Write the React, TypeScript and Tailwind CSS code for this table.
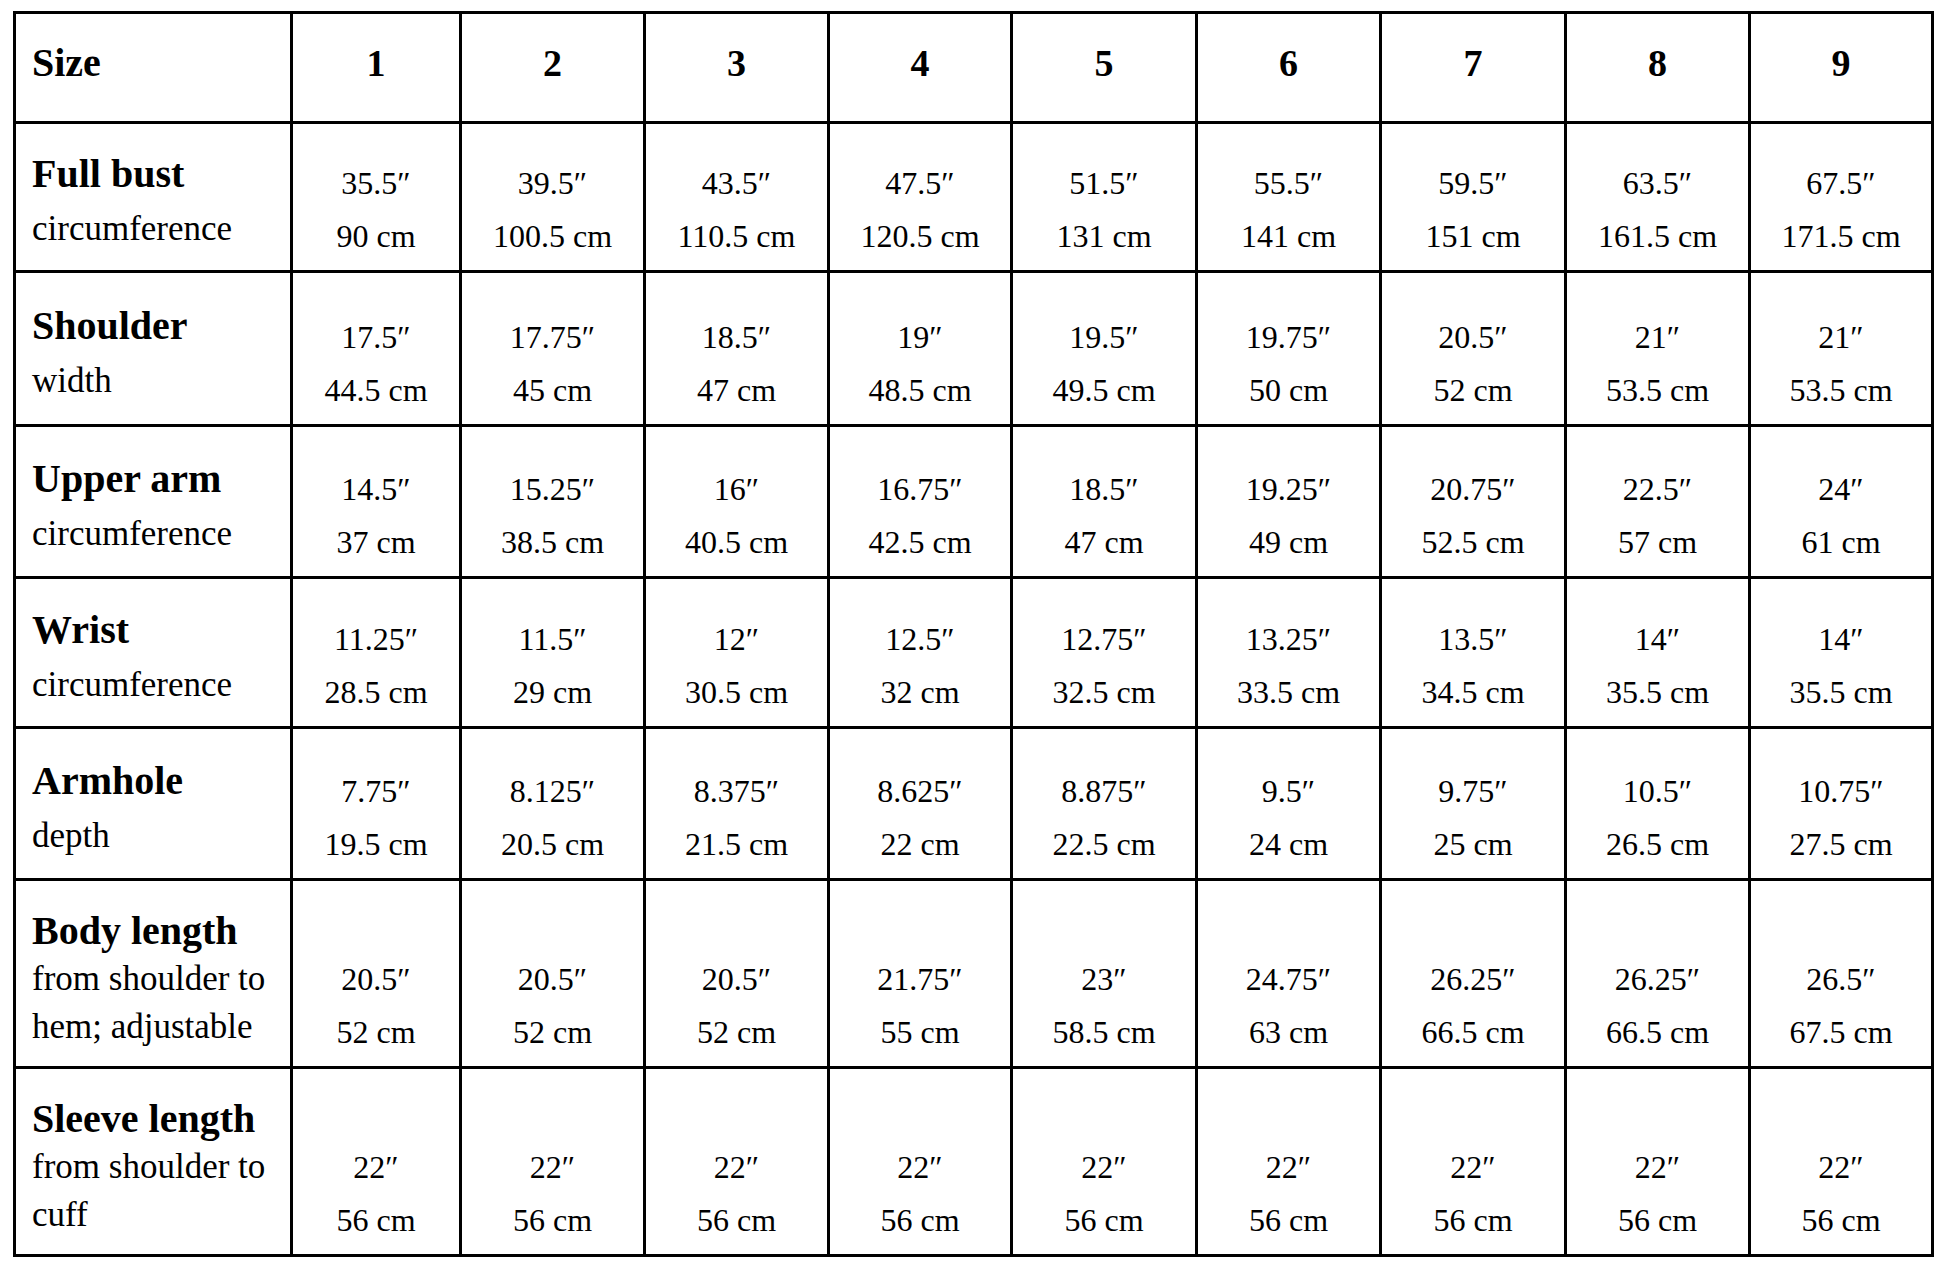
const SIZES = [1, 2, 3, 4, 5, 6, 7, 8, 9];

type Row = {
  title: string;
  sub: string[];
  values: [string, string][];
};

const ROWS: Row[] = [
  {
    title: "Full bust",
    sub: ["circumference"],
    values: [
      ["35.5", "90"],
      ["39.5", "100.5"],
      ["43.5", "110.5"],
      ["47.5", "120.5"],
      ["51.5", "131"],
      ["55.5", "141"],
      ["59.5", "151"],
      ["63.5", "161.5"],
      ["67.5", "171.5"],
    ],
  },
  {
    title: "Shoulder",
    sub: ["width"],
    values: [
      ["17.5", "44.5"],
      ["17.75", "45"],
      ["18.5", "47"],
      ["19", "48.5"],
      ["19.5", "49.5"],
      ["19.75", "50"],
      ["20.5", "52"],
      ["21", "53.5"],
      ["21", "53.5"],
    ],
  },
  {
    title: "Upper arm",
    sub: ["circumference"],
    values: [
      ["14.5", "37"],
      ["15.25", "38.5"],
      ["16", "40.5"],
      ["16.75", "42.5"],
      ["18.5", "47"],
      ["19.25", "49"],
      ["20.75", "52.5"],
      ["22.5", "57"],
      ["24", "61"],
    ],
  },
  {
    title: "Wrist",
    sub: ["circumference"],
    values: [
      ["11.25", "28.5"],
      ["11.5", "29"],
      ["12", "30.5"],
      ["12.5", "32"],
      ["12.75", "32.5"],
      ["13.25", "33.5"],
      ["13.5", "34.5"],
      ["14", "35.5"],
      ["14", "35.5"],
    ],
  },
  {
    title: "Armhole",
    sub: ["depth"],
    values: [
      ["7.75", "19.5"],
      ["8.125", "20.5"],
      ["8.375", "21.5"],
      ["8.625", "22"],
      ["8.875", "22.5"],
      ["9.5", "24"],
      ["9.75", "25"],
      ["10.5", "26.5"],
      ["10.75", "27.5"],
    ],
  },
  {
    title: "Body length",
    sub: ["from shoulder to", "hem; adjustable"],
    values: [
      ["20.5", "52"],
      ["20.5", "52"],
      ["20.5", "52"],
      ["21.75", "55"],
      ["23", "58.5"],
      ["24.75", "63"],
      ["26.25", "66.5"],
      ["26.25", "66.5"],
      ["26.5", "67.5"],
    ],
  },
  {
    title: "Sleeve length",
    sub: ["from shoulder to", "cuff"],
    values: SIZES.map(() => ["22", "56"] as [string, string]),
  },
];

const cell = "border-r-[3px] border-b-[3px] border-black";

export default function App() {
  return (
    <div
      className="min-h-screen bg-white pl-[13px] pt-[11px] text-black"
      style={{ fontFamily: '"Liberation Serif", "Times New Roman", serif' }}
    >
      <div className="grid w-fit grid-cols-[277px_169px_184px_184px_183px_185px_184px_185px_184px_183px] grid-rows-[110px_149px_154px_152px_150px_152px_188px_188px] border-l-[3px] border-t-[3px] border-black">
        {/* header */}
        <div className={`${cell} flex items-center pb-[10px] pl-4 text-[40px] font-bold leading-none`}>
          Size
        </div>
        {SIZES.map((s) => (
          <div
            key={s}
            className={`${cell} flex items-center justify-center pb-[10px] text-[38px] font-bold leading-none`}
          >
            {s}
          </div>
        ))}

        {ROWS.map((row) => (
          <Measurement key={row.title} row={row} />
        ))}
      </div>
    </div>
  );
}

function Measurement({ row }: { row: Row }) {
  const tall = row.sub.length > 1;
  return (
    <>
      <div
        className={`${cell} flex flex-col justify-center pl-4 ${
          tall ? "pt-[10px] leading-[48px]" : "pt-[8px] leading-[55px]"
        }`}
      >
        <span className="text-[40px] font-bold">{row.title}</span>
        {row.sub.map((line) => (
          <span key={line} className="text-[35px]">
            {line}
          </span>
        ))}
      </div>
      {row.values.map(([inch, cm], i) => (
        <div
          key={i}
          className={`${cell} flex flex-col items-center justify-end pb-[7px] text-[32px] leading-[53px]`}
        >
          <span>{inch}″</span>
          <span>{cm} cm</span>
        </div>
      ))}
    </>
  );
}
